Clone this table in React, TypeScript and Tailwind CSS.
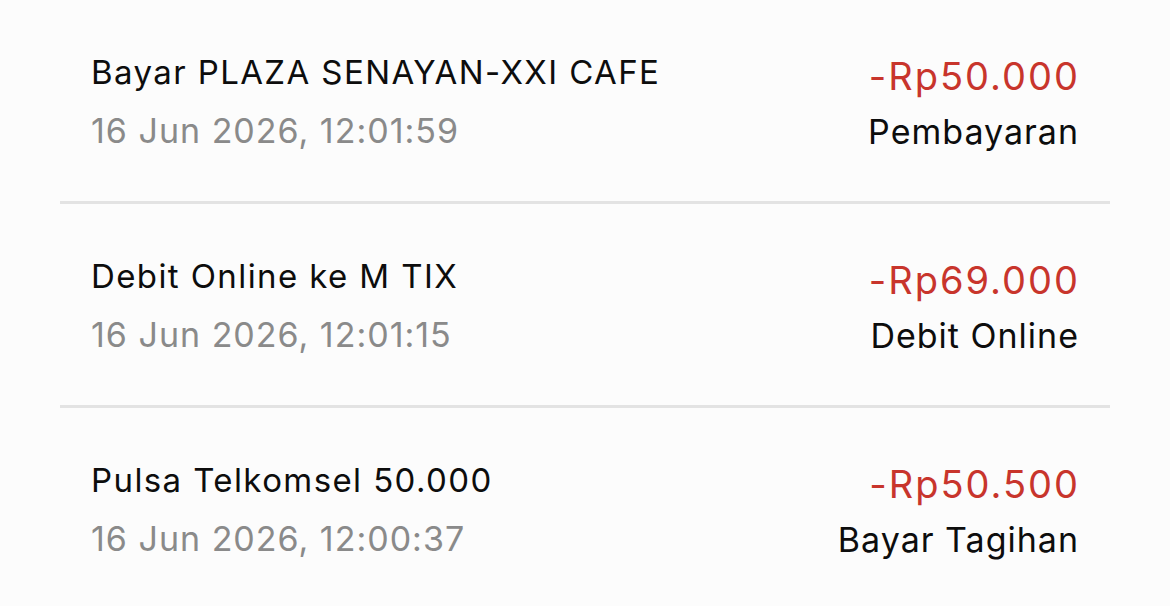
const TRANSACTIONS = [
  { id: '1', title: 'Bayar PLAZA SENAYAN-XXI CAFE', time: '16 Jun 2026, 12:01:59', amount: '-Rp50.000', kind: 'Pembayaran' },
  { id: '2', title: 'Debit Online ke M TIX',        time: '16 Jun 2026, 12:01:15', amount: '-Rp69.000', kind: 'Debit Online' },
  { id: '3', title: 'Pulsa Telkomsel 50.000',       time: '16 Jun 2026, 12:00:37', amount: '-Rp50.500', kind: 'Bayar Tagihan' },
];

export default function App() {
  return (
    <div
      className="w-[1170px] h-[606px] overflow-hidden bg-[#fcfcfc] px-[60px]"
      style={{ fontFamily: 'Inter, "Noto Sans", sans-serif' }}
    >
      <ul className="divide-y-[3px] divide-[#e3e3e3]">
        {TRANSACTIONS.map((t) => (
          <li key={t.id} className="flex items-start justify-between h-[204px] pl-[31px] pr-[32px]">
            <div className="pt-[50px]">
              <p className="text-[33px] leading-[44px] tracking-[1.4px] text-[#0d0d0d]">{t.title}</p>
              <p className="mt-[15px] text-[34px] leading-[44px] tracking-[1px] text-[#8a8a8a]">{t.time}</p>
            </div>
            <div className="pt-[54px] text-right">
              <p className="-mr-[2px] text-[38px] leading-[44px] tracking-[2px] text-[#c8352c]">{t.amount}</p>
              <p className="-mr-[1px] mt-[12px] text-[34px] leading-[44px] tracking-[1px] text-[#0d0d0d]">{t.kind}</p>
            </div>
          </li>
        ))}
      </ul>
    </div>
  );
}
